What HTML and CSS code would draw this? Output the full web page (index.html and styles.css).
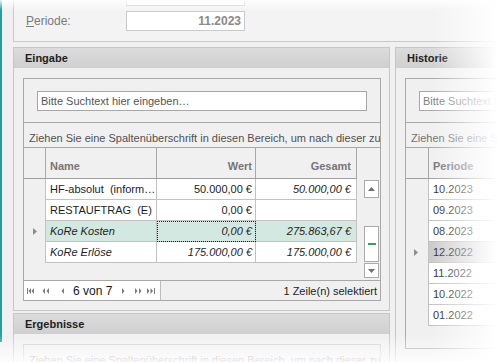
FILE: index.html
```html
<!DOCTYPE html>
<html lang="de">
<head>
<meta charset="utf-8">
<title>Periode</title>
<link rel="stylesheet" href="styles.css">
</head>
<body>
<div class="frame">
  <div class="top-panel">
    <div class="field-row">
      <span class="label"></span>
      <div class="input"></div>
    </div>
    <div class="field-row">
      <span class="label"><u>P</u>eriode:</span>
      <div class="input period">11.2023</div>
    </div>
  </div>

  <div class="columns">
    <div class="left-col">
      <section class="panel eingabe">
        <div class="panel-head">Eingabe</div>
        <div class="panel-body">
          <div class="grid-box">
            <div class="search-area"><div class="search">Bitte Suchtext hier eingeben…</div></div>
            <div class="group-panel">Ziehen Sie eine Spaltenüberschrift in diesen Bereich, um nach dieser zu gruppieren</div>
            <div class="grid-main">
              <div class="table">
                <div class="row head">
                  <div class="ind"></div>
                  <div class="c name">Name</div>
                  <div class="c wert num">Wert</div>
                  <div class="c ges num">Gesamt</div>
                </div>
                <div class="row">
                  <div class="ind"></div>
                  <div class="c name">HF-absolut  (inform…</div>
                  <div class="c wert num">50.000,00 €</div>
                  <div class="c ges num it">50.000,00 €</div>
                </div>
                <div class="row">
                  <div class="ind"></div>
                  <div class="c name">RESTAUFTRAG  (E)</div>
                  <div class="c wert num">0,00 €</div>
                  <div class="c ges num it"></div>
                </div>
                <div class="row sel">
                  <div class="ind"><svg class="tri" width="4" height="7" viewBox="0 0 4 7"><path d="M0 0 L4 3.5 L0 7 Z"/></svg></div>
                  <div class="c name it">KoRe Kosten</div>
                  <div class="c wert num it focus">0,00 €</div>
                  <div class="c ges num it">275.863,67 €</div>
                </div>
                <div class="row">
                  <div class="ind"></div>
                  <div class="c name it">KoRe Erlöse</div>
                  <div class="c wert num it">175.000,00 €</div>
                  <div class="c ges num it">175.000,00 €</div>
                </div>
              </div>
              <div class="scroll-col">
                <div class="scroll-head"></div>
                <div class="scrollbar">
                  <div class="sb-btn up"><svg width="7" height="4" viewBox="0 0 7 4"><path d="M0 4 L3.5 0 L7 4 Z"/></svg></div>
                  <div class="sb-track"></div>
                  <div class="sb-thumb"><span class="dash"></span></div>
                  <div class="sb-btn down"><svg width="7" height="4" viewBox="0 0 7 4"><path d="M0 0 L3.5 4 L7 0 Z"/></svg></div>
                </div>
              </div>
            </div>
            <div class="grid-foot">
              <div class="nav">
                <svg class="n1" width="7" height="6" viewBox="0 0 7 6"><path d="M0 0 H1 V6 H0 Z M4 0 L1.5 3 L4 6 Z M7 0 L4.5 3 L7 6 Z"/></svg>
                <svg class="n2" width="7" height="6" viewBox="0 0 7 6"><path d="M3 0 L0.5 3 L3 6 Z M7 0 L4.5 3 L7 6 Z"/></svg>
                <svg class="n3" width="3" height="6" viewBox="0 0 3 6"><path d="M3 0 L0.5 3 L3 6 Z"/></svg>
                <span class="nav-text">6 von 7</span>
                <svg class="n4" width="3" height="6" viewBox="0 0 3 6"><path d="M0 0 L2.5 3 L0 6 Z"/></svg>
                <svg class="n5" width="7" height="6" viewBox="0 0 7 6"><path d="M0 0 L2.5 3 L0 6 Z M4 0 L6.5 3 L4 6 Z"/></svg>
                <svg class="n6" width="8" height="6" viewBox="0 0 8 6"><path d="M0 0 L2.5 3 L0 6 Z M3.5 0 L6 3 L3.5 6 Z M7 0 H8 V6 H7 Z"/></svg>
              </div>
              <div class="sel-info">1 Zeile(n) selektiert</div>
            </div>
          </div>
        </div>
      </section>

      <section class="panel ergebnisse">
        <div class="panel-head">Ergebnisse</div>
        <div class="panel-body">
          <div class="grid-box light">
            <div class="group-panel plain">Ziehen Sie eine Spaltenüberschrift in diesen Bereich, um nach dieser zu gruppieren</div>
          </div>
        </div>
      </section>
    </div>

    <section class="panel historie">
      <div class="panel-head">Historie</div>
      <div class="panel-body">
        <div class="grid-box">
          <div class="search-area"><div class="search soft">Bitte Suchtext hier eingeben…</div></div>
          <div class="group-panel soft">Ziehen Sie eine Spaltenüberschrift in diesen Bereich, um nach dieser zu gruppieren</div>
          <div class="hist-table">
            <div class="row head">
              <div class="ind wide"></div>
              <div class="c per">Periode</div>
            </div>
            <div class="row"><div class="ind wide"></div><div class="c per">10.2023</div></div>
            <div class="row"><div class="ind wide"></div><div class="c per">09.2023</div></div>
            <div class="row"><div class="ind wide"></div><div class="c per">08.2023</div></div>
            <div class="row hsel"><div class="ind wide"><svg class="tri" width="4" height="7" viewBox="0 0 4 7"><path d="M0 0 L4 3.5 L0 7 Z"/></svg></div><div class="c per">12.2022</div></div>
            <div class="row"><div class="ind wide"></div><div class="c per">11.2022</div></div>
            <div class="row"><div class="ind wide"></div><div class="c per">10.2022</div></div>
            <div class="row"><div class="ind wide"></div><div class="c per">01.2022</div></div>
          </div>
        </div>
      </div>
    </section>
  </div>
</div>
<div class="fade"></div>
</body>
</html>
```

FILE: styles.css
```css
* { box-sizing: border-box; }
html, body { margin: 0; padding: 0; }
body {
  width: 502px;
  height: 362px;
  overflow: hidden;
  position: relative;
  background: #f0f0f0;
  font-family: "Liberation Sans", Arial, sans-serif;
  font-size: 11px;
  color: #1e1e1e;
}
.frame {
  height: 362px;
  border-left: 2px solid #2b9c99;
  padding-left: 11px;
}

/* top panel */
.top-panel {
  width: 520px;
  margin-top: -20px;
  padding: 6px 0 10px 12px;
  border: 1px solid #c9c9c9;
  border-top: none;
  background: #f3f3f3;
  display: flex;
  flex-direction: column;
  gap: 5px;
}
.field-row { display: flex; align-items: center; height: 20px; }
.label { width: 100px; font-size: 12px; color: #7a7a7a; }
.input {
  width: 119px;
  height: 20px;
  border: 1px solid #cacaca;
  background: #fff;
}
.input.period {
  text-align: right;
  padding-right: 3px;
  font-weight: bold;
  font-size: 12px;
  line-height: 18px;
  color: #8a8a8a;
}

/* columns */
.columns { display: flex; gap: 5px; margin-top: 5px; }
.left-col { width: 377px; flex: none; display: flex; flex-direction: column; gap: 2px; }

.panel { border: 1px solid #c6c6c6; background: #f0f0f0; }
.panel-head {
  height: 20px;
  line-height: 20px;
  padding-left: 11px;
  font-weight: bold;
  color: #1e1e1e;
  background: linear-gradient(#dcdcdc, #cfcfcf);
}
.panel-body { padding: 10px 8px 9px 9px; }
.eingabe { height: 264px; }
.ergebnisse { height: 80px; }
.historie { width: 140px; flex: none; height: 330px; }

/* grid control */
.grid-box { border: 1px solid #a8a8a8; background: #f0f0f0; }
.grid-box.light { border-color: #cfcfcf; }
.search-area { padding: 12px 13px 11px 13px; border-bottom: 1px solid #a8a8a8; }
.search {
  height: 20px;
  border: 1px solid #a8a8a8;
  background: #fff;
  padding-left: 3px;
  line-height: 18px;
  color: #555;
  white-space: nowrap;
  overflow: hidden;
}
.search.soft { color: #808080; }
.group-panel {
  height: 25px;
  padding: 9px 0 0 5px;
  line-height: 13px;
  border-bottom: 1px solid #a8a8a8;
  color: #505050;
  white-space: nowrap;
  overflow: hidden;
}
.group-panel.soft { color: #707070; }
.group-panel.plain { border-bottom: none; padding-top: 9px; height: 30px; color: #8a8a8a; }

.grid-main {
  display: flex;
  height: 133px;
  border-bottom: 1px solid #a8a8a8;
}
.table { width: 333px; flex: none; }
.row { display: flex; height: 21px; }
.row.head { height: 31px; border-bottom: 1px solid #a0a0a0; }
.ind { width: 21px; flex: none; display: flex; align-items: center; padding-left: 9px; }
.ind.wide { width: 22px; padding-left: 8px; }
.tri { fill: #8c8c8c; }

.c {
  display: flex;
  align-items: center;
  white-space: pre;
  overflow: hidden;
  background: #fff;
  border-right: 1px solid #c2c2c2;
  border-bottom: 1px solid #c2c2c2;
  padding: 0 4px;
}
.name { width: 112px; border-left: 1px solid #c2c2c2; }
.wert { width: 99px; padding-right: 3px; }
.ges { width: 101px; padding-right: 5px; }
.num { justify-content: flex-end; }
.it { font-style: italic; }

.head .c {
  background: transparent;
  border-bottom: none;
  border-color: #a8a8a8;
  align-items: flex-end;
  padding-bottom: 6px;
  font-weight: bold;
  color: #767676;
}
.sel .c { background: #d3e8e0; }
.focus { outline: 1px dotted #222; outline-offset: -1px; }

/* scrollbar */
.scroll-col { width: 23px; flex: none; }
.scroll-head { height: 31px; }
.scrollbar {
  margin: 1px 1px 0 7px;
  width: 15px;
  display: flex;
  flex-direction: column;
}
.sb-btn, .sb-thumb {
  background: #fff;
  border: 1px solid #ababab;
  display: flex;
  align-items: center;
  justify-content: center;
}
.sb-btn svg { fill: #707070; }
.up { height: 18px; }
.sb-track { height: 28px; }
.sb-thumb { height: 36px; margin-bottom: 1px; }
.down { height: 15px; }
.dash { width: 8px; height: 2px; background: #3f9a5e; }

/* footer */
.grid-foot {
  height: 19px;
  display: flex;
  align-items: center;
  justify-content: space-between;
}
.nav {
  width: 137px;
  height: 19px;
  background: #fff;
  border-right: 1px solid #bdbdbd;
  display: flex;
  align-items: center;
  padding-left: 3px;
}
.nav svg { fill: #7c7c7c; flex: none; }
.n2 { margin-left: 8px; }
.n3 { margin-left: 12px; }
.nav-text { width: 40px; margin-left: 9px; font-size: 12px; color: #1a1a1a; flex: none; }
.n4 { margin-left: 9px; }
.n5 { margin-left: 10px; }
.n6 { margin-left: 5px; }
.sel-info { padding-right: 3px; color: #1e1e1e; }

/* historie table */
.hist-table { height: 200px; }
.per { width: 100px; border-left: 1px solid #c2c2c2; color: #2a2a2a; }
.hsel .c { background: linear-gradient(to right, #cbcbcb, #e8e8e8); }

/* screenshot fade */
.fade {
  position: absolute;
  inset: 0;
  pointer-events: none;
  background:
    linear-gradient(to right, rgba(255,255,255,0) 432px, rgba(255,255,255,1) 498px),
    linear-gradient(to bottom, rgba(255,255,255,0.9) 0px, rgba(255,255,255,0) 10px),
    linear-gradient(to top, rgba(255,255,255,0.85) 0px, rgba(255,255,255,0) 28px);
}
```
